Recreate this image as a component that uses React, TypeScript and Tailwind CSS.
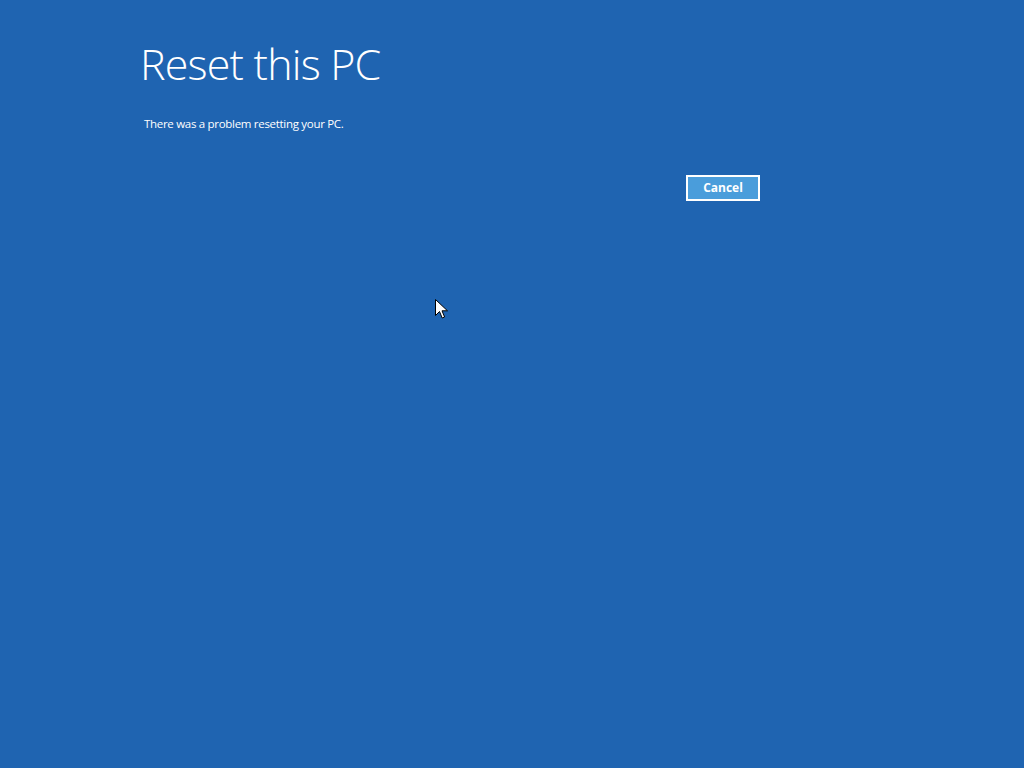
export default function App() {
  return (
    <div
      className="relative h-[768px] w-[1024px] overflow-hidden bg-[#1f64b1] text-white"
      style={{ fontFamily: '"Open Sans", "Noto Sans", sans-serif' }}
    >
      <div className="ml-[140px] w-[620px] pt-[32px]">
        <h1 className="text-[43px] font-light leading-[64px] tracking-[-0.8px]">Reset this PC</h1>
        <p className="mt-[20px] ml-[4px] text-[11.5px] leading-[16px] tracking-[-0.3px]">There was a problem resetting your PC.</p>
        <div className="mt-[43px] flex justify-end">
          <button className="h-[26px] w-[74px] border-2 border-white bg-[#4a9ddb] text-[12px] font-bold leading-none text-white">
            Cancel
          </button>
        </div>
      </div>

      {/* mouse pointer */}
      <svg className="absolute left-[435px] top-[299px]" width="13" height="21" viewBox="0 0 13 21">
        <path d="M0.5 0.5 L0.5 16.5 L4.5 12.5 L7.2 19 L9.6 18 L7 11.8 L12.5 11.8 Z" fill="#fff" stroke="#000" strokeWidth="1" strokeLinejoin="miter" />
      </svg>
    </div>
  )
}
